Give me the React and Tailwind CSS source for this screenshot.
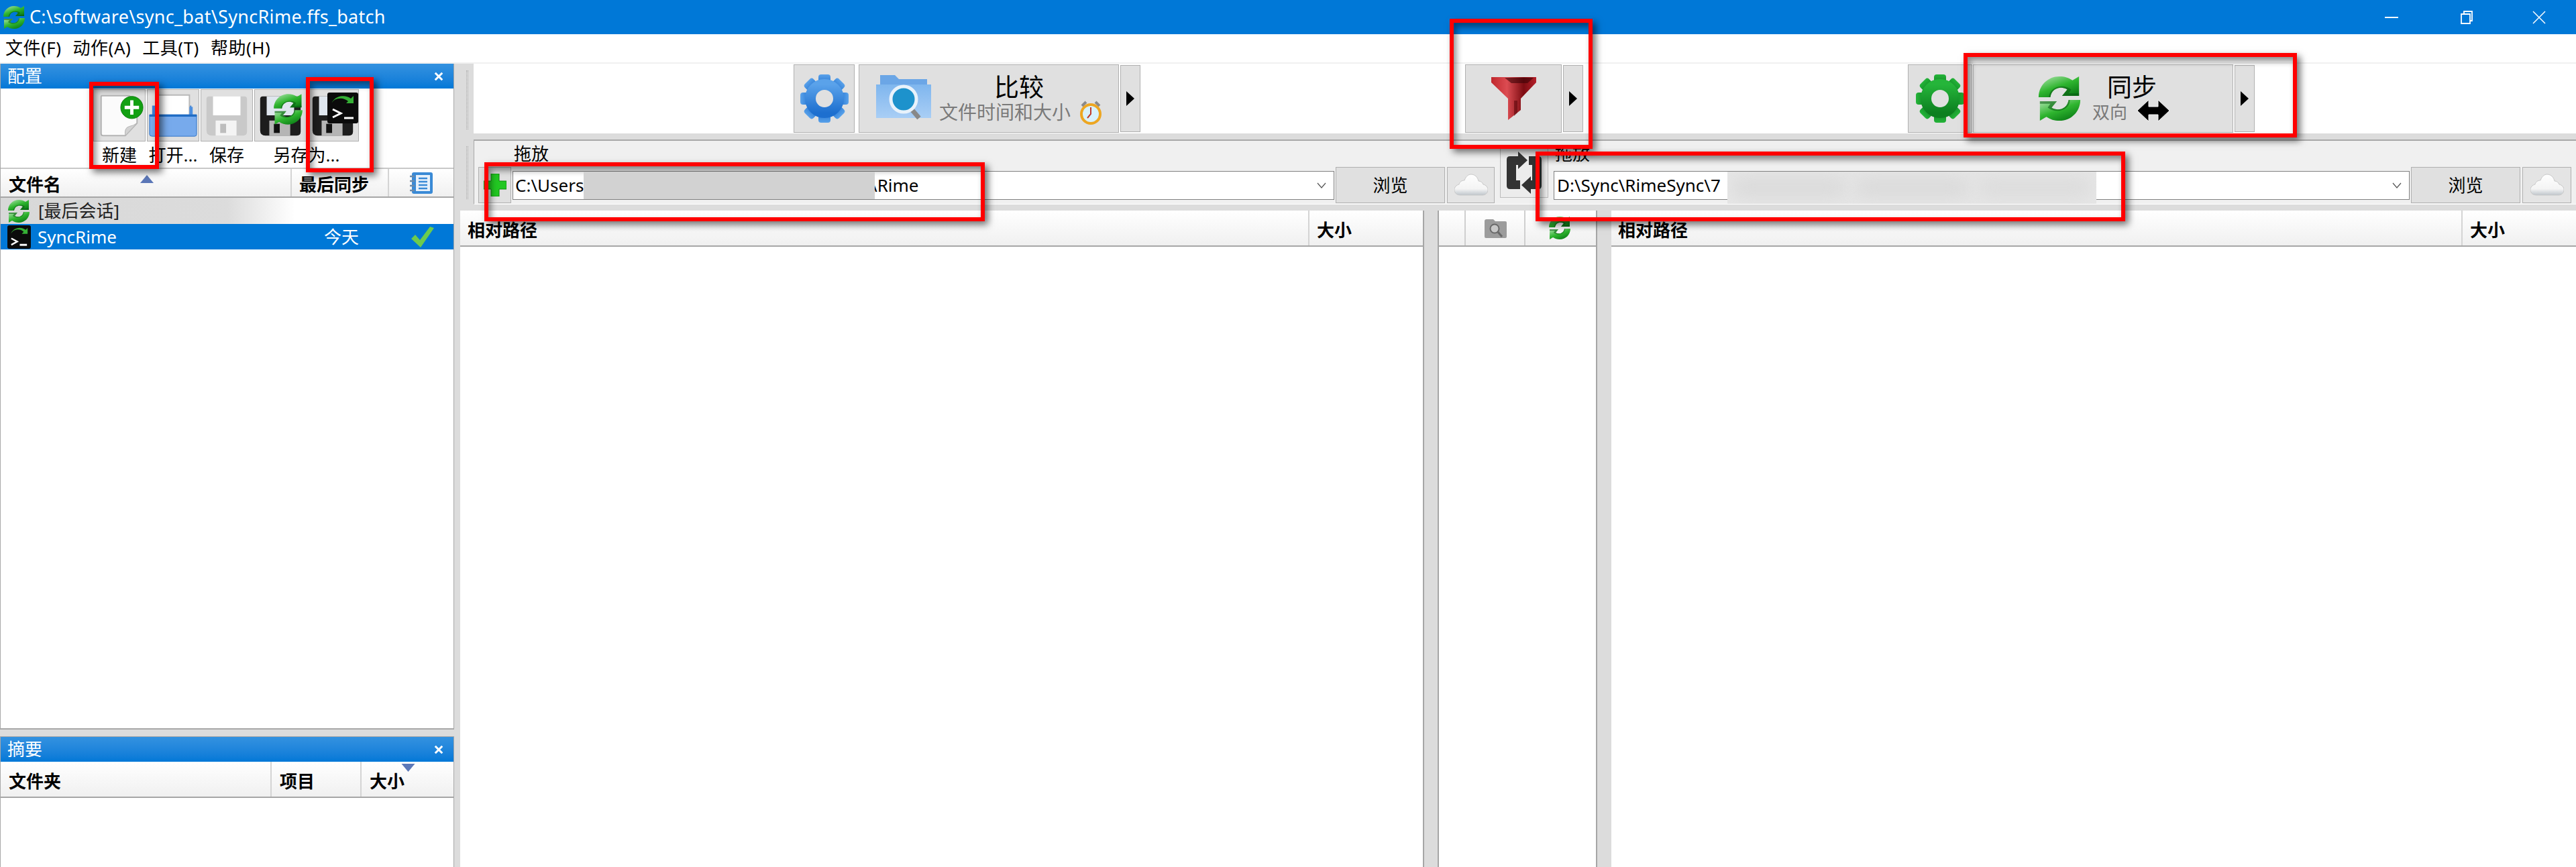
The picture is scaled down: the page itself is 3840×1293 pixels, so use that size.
import React from "react";

const font = "font-['Noto_Sans','Noto_Sans_CJK_SC',sans-serif]";

function SyncIcon({ className, id = "s" }) {
  return (
    <svg viewBox="0 0 34 36" className={className}>
      <defs>
        <linearGradient id={id} x1="0" y1="0" x2="0.7" y2="1">
          <stop offset="0" stopColor="#b4e6b4" />
          <stop offset="0.55" stopColor="#2fb52f" />
          <stop offset="1" stopColor="#0b7d16" />
        </linearGradient>
      </defs>
      <g fill={`url(#${id})`}>
        <path d="M1 17C1 8 8 1 17 1c4 0 7 1 10 3l5-3v15H19l4-5c-5-3-12-1-13 6z" />
        <path d="M33 19c0 9-7 16-16 16-4 0-7-1-10-3l-5 3V20h13l-4 5c5 3 12 1 13-6z" />
      </g>
      <path d="M10 17c1-7 8-9 13-6l-4 5h13v-2H24l2-3c-6-5-17-2-17 6z" fill="#0a5a12" opacity="0.55" />
      <path d="M24 19c-1 7-8 9-13 6l4-5H2v2h8l-2 3c6 5 17 2 17-6z" fill="#0a5a12" opacity="0.55" />
    </svg>
  );
}

function Gear({ className, color, dark, id }) {
  const teeth = [0, 45, 90, 135, 180, 225, 270, 315];
  return (
    <svg viewBox="0 0 74 74" className={className}>
      <defs>
        <linearGradient id={id} x1="0" y1="0" x2="0" y2="1">
          <stop offset="0" stopColor={color} />
          <stop offset="1" stopColor={dark} />
        </linearGradient>
      </defs>
      <g fill={`url(#${id})`}>
        {teeth.map((a) => (
          <rect key={a} x="28" y="1" width="18" height="16" rx="4" transform={`rotate(${a} 37 37)`} />
        ))}
      </g>
      <circle cx="37" cy="37" r="21" fill="none" stroke={`url(#${id})`} strokeWidth="16" />
      <circle cx="37" cy="37" r="8" fill="#e0e0e0" />
    </svg>
  );
}

function Floppy({ className, light }) {
  const body = light ? "#c9c9c9" : "#1d1d1d";
  const label = light ? "#ffffff" : "#dfe6ee";
  const shutter = light ? "#f4f4f4" : "#b5b5b5";
  const hole = light ? "#bdbdbd" : "#111";
  return (
    <svg viewBox="0 0 78 78" className={className}>
      <path d="M8 14q0-4 4-4h54q4 0 4 4v50q0 6-6 6H16q-8 0-8-8z" fill={body} />
      <rect x="18" y="10" width="42" height="29" fill={label} />
      <rect x="22" y="47" width="32" height="23" fill={shutter} />
      <rect x="29" y="52" width="9" height="14" fill={hole} />
    </svg>
  );
}

function ToolBtn({ children }) {
  return (
    <div className="relative w-[78px] h-[78px] shrink-0 bg-[#e0e0e0] border border-[#b0b0b0] flex items-center justify-center">
      {children}
    </div>
  );
}

function Arrow() {
  return (
    <div className="w-[30px] ml-[2px] my-px bg-[#e0e0e0] border border-[#b0b0b0] flex items-center justify-center">
      <svg viewBox="0 0 12 22" className="w-[12px] h-[22px]">
        <path d="M0 0l12 11L0 22z" fill="#000" />
      </svg>
    </div>
  );
}

function Grip({ className }) {
  return <div className={`w-[3px] border-x border-dotted border-[#a8a8a8] ${className}`} />;
}

function Funnel() {
  return (
    <svg viewBox="0 0 67 66" className="w-[67px] h-[66px]">
      <defs>
        <linearGradient id="fn" x1="0" y1="0" x2="1" y2="0">
          <stop offset="0" stopColor="#c0272d" />
          <stop offset="0.35" stopColor="#dc4c52" />
          <stop offset="0.72" stopColor="#7d0c12" />
          <stop offset="1" stopColor="#b5202a" />
        </linearGradient>
      </defs>
      <path d="M0 1h67v8L44 33v17L25 65V33L0 9z" fill="url(#fn)" />
      <path d="M20 2h43l-9 8H30z" fill="#3a0306" opacity="0.6" />
      <path d="M34 36h5v18l-5 5z" fill="#5c070c" opacity="0.6" />
    </svg>
  );
}

function Cloud() {
  return (
    <svg viewBox="0 0 50 34" className="w-[50px] h-[34px]">
      <defs>
        <linearGradient id="cl" x1="0" y1="0" x2="0" y2="1">
          <stop offset="0" stopColor="#ffffff" />
          <stop offset="0.7" stopColor="#f4f4f4" />
          <stop offset="1" stopColor="#bfc6cc" />
        </linearGradient>
      </defs>
      <path d="M9 32C2 32 0 27 0 24c0-4 3-7 7-8 1-4 4-6 8-6 2-6 6-9 10-9 6 0 10 5 11 10 3 0 6 2 7 5 4 1 7 4 7 8 0 5-4 8-8 8z" fill="url(#cl)" stroke="#c8c8c8" />
    </svg>
  );
}

function BrowseBtn() {
  return (
    <div className="w-[163px] h-[54px] bg-[#e0e0e0] border border-[#b0b0b0] flex items-center justify-center text-[26px] text-black">
      浏览
    </div>
  );
}

function CloudBtn({ className }) {
  return (
    <div className={`h-[54px] bg-[#e4e4e4] border border-[#b0b0b0] flex items-center justify-center ${className}`}>
      <Cloud />
    </div>
  );
}

function Chevron() {
  return (
    <svg viewBox="0 0 14 9" className="absolute right-[11px] top-[16px] w-[14px] h-[9px]">
      <path d="M1 1l6 7 6-7" fill="none" stroke="#555" strokeWidth="1.2" />
    </svg>
  );
}

function HeaderCell({ className, children }) {
  return (
    <div className={`h-full flex items-center pt-[6px] font-bold text-[26px] text-black border-r-2 border-[#d4d4d4] ${className}`}>
      {children}
    </div>
  );
}

const headerBar = "flex h-[54px] shrink-0 bg-gradient-to-b from-white to-[#f0f0f0] border-b-2 border-[#a6a6a6]";

function Caption({ title }) {
  return (
    <div className="h-[37px] shrink-0 flex items-center justify-between pl-[10px] pr-[14px] text-white text-[26px] bg-gradient-to-b from-[#3392e0] to-[#0078d7]">
      <span>{title}</span>
      <svg viewBox="0 0 16 16" className="w-[16px] h-[14px]">
        <path d="M2 2l12 12M14 2L2 14" stroke="#fff" strokeWidth="3.4" />
      </svg>
    </div>
  );
}

function RedBox({ className }) {
  return (
    <div className={`absolute border-[6px] border-[#ff0000] shadow-[5px_5px_10px_rgba(0,0,0,0.55),inset_4px_6px_10px_rgba(0,0,0,0.45)] ${className}`} />
  );
}

export default function App() {
  return (
    <div className={`relative w-[3840px] h-[1293px] overflow-hidden flex flex-col bg-[#dcdcdc] ${font}`}>
      {/* title bar */}
      <div className="h-[51px] shrink-0 bg-[#0078d7] flex items-center text-white">
        <SyncIcon id="t1" className="w-[34px] h-[36px] ml-[4px] mt-[1px]" />
        <span className="ml-[6px] text-[27px] tracking-[0.3px]">C:\software\sync_bat\SyncRime.ffs_batch</span>
        <div className="ml-auto flex items-center">
          <div className="w-[20px] h-[2px] bg-white mr-[93px]" />
          <svg viewBox="0 0 18 20" className="w-[18px] h-[20px] mr-[89px]">
            <path d="M5 4V1h12v14h-3M1 5h13v14H1z" fill="none" stroke="#fff" strokeWidth="1.8" />
          </svg>
          <svg viewBox="0 0 20 20" className="w-[20px] h-[20px] mr-[45px]">
            <path d="M1 1l18 18M19 1L1 19" stroke="#fff" strokeWidth="1.5" />
          </svg>
        </div>
      </div>

      {/* menu */}
      <div className="h-[44px] shrink-0 bg-white border-b-2 border-[#f0f0f0] flex items-center pl-[8px] gap-[17px] text-[26px] tracking-[0.5px] text-black pb-[2px]">
        <span>文件(F)</span>
        <span>动作(A)</span>
        <span>工具(T)</span>
        <span>帮助(H)</span>
      </div>

      <div className="flex-1 flex min-h-0">
        {/* left panes */}
        <div className="w-[677px] shrink-0 flex flex-col">
          <div className="h-[993px] shrink-0 flex flex-col bg-white border-x border-b-2 border-[#a8a8a8]">
            <Caption title="配置" />
            <div className="h-[120px] shrink-0 flex pl-[138px] gap-[2px] border-b-2 border-[#c8c8c8] text-[26px] text-black">
              <div className="flex flex-col items-center pt-px">
                <ToolBtn>
                  <svg viewBox="0 0 78 78" className="w-[78px] h-[78px]">
                    <path d="M12 9h42l12 12v30L48 70H14q-3 0-3-3V11q0-2 1-2z" fill="#fbfbfb" stroke="#b4b4b4" strokeWidth="2" />
                    <path d="M48 70q-2-12 6-14 6-1 12-5z" fill="#d2d2d2" stroke="#b4b4b4" />
                    <circle cx="58" cy="27" r="17" fill="#12a012" stroke="#0a7c0a" />
                    <path d="M58 16v22M47 27h22" stroke="#fff" strokeWidth="5" />
                  </svg>
                </ToolBtn>
                <span className="mt-[1px]">新建</span>
              </div>
              <div className="flex flex-col items-center pt-px">
                <ToolBtn>
                  <svg viewBox="0 0 78 78" className="w-[78px] h-[78px]">
                    <path d="M7 24h60v30H7z" fill="#3f83d8" />
                    <path d="M16 8h48v42H16z" fill="#fff" stroke="#b8b8b8" strokeWidth="2" />
                    <path d="M64 26h5v20h-5z" fill="#4b8fe0" />
                    <path d="M3 38h72v30q0 3-3 3H7q-4 0-4-3z" fill="#77aaec" stroke="#2f74c8" strokeWidth="1" />
                    <path d="M3 38h72v3H3z" fill="#1f6cc4" />
                  </svg>
                </ToolBtn>
                <span className="mt-[1px]">打开...</span>
              </div>
              <div className="flex flex-col items-center pt-px">
                <ToolBtn>
                  <Floppy light className="w-[78px] h-[78px]" />
                </ToolBtn>
                <span className="mt-[1px]">保存</span>
              </div>
              <div className="flex flex-col items-center pt-px">
                <div className="flex">
                  <ToolBtn>
                    <Floppy className="w-[78px] h-[78px]" />
                    <SyncIcon id="t2" className="absolute left-[26px] top-[5px] w-[47px] h-[48px]" />
                  </ToolBtn>
                  <ToolBtn>
                    <Floppy className="w-[78px] h-[78px]" />
                    <svg viewBox="0 0 46 46" className="absolute left-[30px] top-[4px] w-[46px] h-[46px]">
                      <rect width="46" height="46" rx="3" fill="#0b0b0b" />
                      <path d="M6 17c3-9 17-11 25-4l-3 3h11V5l-4 4C26 2 10 5 6 17z" fill="#35b035" />
                      <path d="M8 25l12 6-12 6" fill="none" stroke="#fff" strokeWidth="3" />
                      <path d="M25 38h14" stroke="#fff" strokeWidth="3" />
                    </svg>
                  </ToolBtn>
                </div>
                <span className="mt-[1px]">另存为...</span>
              </div>
            </div>
            <div className="relative flex h-[43px] shrink-0 bg-gradient-to-b from-white to-[#f0f0f0] border-b-2 border-[#a6a6a6]">
              <HeaderCell className="w-[434px] pl-[12px]">文件名</HeaderCell>
              <HeaderCell className="w-[145px] pl-[11px]">最后同步</HeaderCell>
              <div className="flex-1 flex items-center justify-center">
                <svg viewBox="0 0 35 34" className="w-[35px] h-[34px]">
                  <rect x="3" y="1" width="31" height="32" rx="3" fill="#3a8ad6" />
                  <rect x="9" y="5" width="21" height="24" fill="#e8f1fb" />
                  <path d="M13 10h13M13 15h13M13 20h13M13 25h13" stroke="#3a8ad6" strokeWidth="2.4" />
                  <path d="M0 7h7M0 14h7M0 21h7M0 28h7" stroke="#6d8aa8" strokeWidth="2.4" />
                </svg>
              </div>
              <svg viewBox="0 0 20 12" className="absolute left-[208px] top-[9px] w-[20px] h-[12px]">
                <path d="M10 0l10 12H0z" fill="#5c78b8" />
              </svg>
            </div>
            <div className="h-[39px] shrink-0 flex items-center pl-[10px] text-[26px] text-[#222] bg-gradient-to-r from-[#d8d8d8] via-[#dcdcdc] via-50% to-white to-[65%]">
              <SyncIcon id="t3" className="w-[34px] h-[36px]" />
              <span className="ml-[12px]">[最后会话]</span>
            </div>
            <div className="h-[38px] shrink-0 flex items-center pl-[10px] text-[26px] text-white bg-[#0078d7]">
              <svg viewBox="0 0 36 36" className="w-[35px] h-[35px]">
                <rect width="36" height="36" rx="3" fill="#0b0b0b" />
                <path d="M5 14c3-8 14-10 20-4l-3 3h9V4l-3 3C20 1 8 4 5 14z" fill="#35b035" />
                <path d="M6 20l9 5-9 5" fill="none" stroke="#fff" strokeWidth="2.5" />
                <path d="M19 30h11" stroke="#fff" strokeWidth="3" />
              </svg>
              <span className="ml-[10px] w-[427px]">SyncRime</span>
              <span className="w-[130px]">今天</span>
              <svg viewBox="0 0 34 34" className="w-[34px] h-[34px]">
                <path d="M0 20l6-6 7 8L28 2l6 2-20 29z" fill="#6ccb4e" />
              </svg>
            </div>
          </div>
          <div className="h-[10px] shrink-0" />
          <div className="flex-1 flex flex-col bg-white border-x border-t border-[#a8a8a8]">
            <Caption title="摘要" />
            <div className={`relative ${headerBar}`}>
              <HeaderCell className="w-[404px] pl-[12px]">文件夹</HeaderCell>
              <HeaderCell className="w-[134px] pl-[12px]">项目</HeaderCell>
              <div className="flex-1 h-full flex items-center pt-[6px] pl-[12px] font-bold text-[26px] text-black">大小</div>
              <svg viewBox="0 0 20 12" className="absolute left-[597px] top-[3px] w-[21px] h-[12px]">
                <path d="M0 0h20L10 12z" fill="#5c78b8" />
              </svg>
            </div>
          </div>
        </div>

        <div className="w-[9px] shrink-0" />

        {/* main area */}
        <div className="flex-1 min-w-0 flex flex-col">
          <div className="flex h-[104px] shrink-0">
            <div className="w-[20px] shrink-0 flex justify-center pt-[10px] pb-[6px]">
              <Grip className="h-full" />
            </div>
            <div className="flex-1 bg-white flex py-px pl-[477px]">
              <div className="w-[91px] bg-[#e0e0e0] border border-[#b0b0b0] flex items-center justify-center">
                <Gear id="g1" color="#5aa2ea" dark="#1d6fcf" className="w-[74px] h-[74px]" />
              </div>
              <div className="w-[388px] ml-[6px] bg-[#e0e0e0] border border-[#b0b0b0] relative flex">
                <svg viewBox="0 0 82 68" className="absolute left-[25px] top-[15px] w-[82px] h-[68px]">
                  <defs>
                    <linearGradient id="fd" x1="0" y1="0" x2="0" y2="1">
                      <stop offset="0" stopColor="#7fb6ee" />
                      <stop offset="1" stopColor="#a9cef5" />
                    </linearGradient>
                  </defs>
                  <path d="M6 0h22l6 6h42v14H6z" fill="#6ba6e6" />
                  <path d="M0 14h82v50H0z" fill="url(#fd)" />
                  <path d="M52 50l12 14" stroke="#888" strokeWidth="7" />
                  <circle cx="41" cy="36" r="19" fill="#1d92cc" stroke="#e8f2fb" strokeWidth="5" />
                </svg>
                <span className="absolute left-[201px] top-[8px] text-[37px] leading-[50px] text-black">比较</span>
                <span className="absolute left-[119px] top-[53px] text-[28px] leading-[34px] text-[#7a7a7a] whitespace-nowrap">文件时间和大小</span>
                <svg viewBox="0 0 34 36" className="absolute left-[328px] top-[53px] w-[34px] h-[36px]">
                  <path d="M4 8l6-6M30 8l-6-6" stroke="#8a8a8a" strokeWidth="4" />
                  <circle cx="17" cy="20" r="14" fill="#d8f1fb" stroke="#eda622" strokeWidth="4" />
                  <path d="M17 10v10l-5 6" fill="none" stroke="#c0392b" strokeWidth="2" />
                </svg>
              </div>
              <Arrow />
              <div className="w-[144px] ml-[484px] bg-[#e0e0e0] border border-[#b0b0b0] flex items-center justify-center">
                <Funnel />
              </div>
              <Arrow />
              <div className="w-[96px] ml-[484px] bg-[#e0e0e0] border border-[#b0b0b0] flex items-center justify-center">
                <Gear id="g2" color="#25b53a" dark="#0c7f1f" className="w-[74px] h-[74px]" />
              </div>
              <div className="w-[388px] ml-px bg-[#e0e0e0] border border-[#b0b0b0] relative">
                <SyncIcon id="t4" className="absolute left-[94px] top-[15px] w-[68px] h-[70px]" />
                <span className="absolute left-[199px] top-[8px] text-[37px] leading-[50px] text-black">同步</span>
                <span className="absolute left-[177px] top-[53px] text-[26px] leading-[34px] text-[#7a7a7a]">双向</span>
                <svg viewBox="0 0 48 32" className="absolute left-[244px] top-[52px] w-[48px] h-[32px]">
                  <path d="M0 16L17 0v10h14V0l17 16-17 16V22H17v10z" fill="#000" stroke="#f4f4f4" />
                </svg>
              </div>
              <Arrow />
            </div>
          </div>

          {/* folder bar */}
          <div className="flex mt-[9px] h-[97px] shrink-0">
            <div className="w-[20px] shrink-0 flex justify-center pt-[10px] pb-[8px]">
              <Grip className="h-full" />
            </div>
            <div className="flex-1 bg-[#f0f0f0] border-t-2 border-l border-b border-t-[#a8a8a8] border-l-[#a8a8a8] border-b-white flex pl-[6px] text-[26px] text-black">
              <div className="w-[1515px] flex flex-col">
                <div className="h-[39px] pl-[53px] flex items-center">拖放</div>
                <div className="flex items-center h-[54px]">
                  <div className="w-[49px] h-[54px] bg-[#e0e0e0] border border-[#b0b0b0] flex items-center justify-center">
                    <svg viewBox="0 0 34 34" className="w-[34px] h-[34px]">
                      <path d="M11 0h12v11h11v12H23v11H11V23H0V11h11z" fill="#22c722" stroke="#0d8a0d" />
                    </svg>
                  </div>
                  <div className="relative w-[1225px] h-[43px] ml-[2px] bg-white border border-[#808080] flex items-center pl-[3px]">
                    <span className="w-[102px] overflow-hidden whitespace-nowrap">C:\Users</span>
                    <div className="relative z-10 w-[434px] h-full bg-[#d2d2d2]" />
                    <span className="-ml-[6px]">\Rime</span>
                    <Chevron />
                  </div>
                  <div className="ml-[2px]"><BrowseBtn /></div>
                  <CloudBtn className="w-[71px] ml-[3px]" />
                </div>
              </div>
              <div className="w-[72px] h-[75px] ml-[8px] mt-[10px] bg-[#ececec] border border-[#bcbcbc] flex items-center justify-center">
                <svg viewBox="0 0 52 63" className="w-[52px] h-[63px]">
                  <path d="M0 12q0-5 5-5H17V0L31 13 17 26V20H14V43H20V56H5q-5 0-5-5z" fill="#333" />
                  <path d="M33 7H47q5 0 5 5V51q0 5-5 5H36V63L22 50 36 37V43H38V20H33z" fill="#333" />
                </svg>
              </div>
              <div className="w-[1517px] ml-[8px] flex flex-col">
                <div className="h-[39px] pl-[2px] flex items-center">拖放</div>
                <div className="flex items-center h-[54px]">
                  <div className="relative w-[1277px] h-[43px] bg-white border border-[#808080] flex items-start pl-[4px]">
                    <span className="w-[254px] h-full flex items-center whitespace-nowrap overflow-hidden">D:\Sync\RimeSync\7</span>
                    <div className="relative z-10 w-[550px] h-[48px] bg-[#e6e6e6] overflow-hidden flex items-center justify-around">
                      <div className="w-[170px] h-[30px] rounded-full bg-[#dadada] blur-md" />
                      <div className="w-[170px] h-[30px] rounded-full bg-[#dadada] blur-md" />
                      <div className="w-[170px] h-[30px] rounded-full bg-[#dcdcdc] blur-md" />
                    </div>
                    <Chevron />
                  </div>
                  <div className="ml-[2px]"><BrowseBtn /></div>
                  <CloudBtn className="w-[73px] ml-[3px]" />
                </div>
              </div>
            </div>
          </div>

          {/* file grids */}
          <div className="flex-1 mt-[9px] flex min-h-0">
            <div className="w-[1437px] bg-white border-r-2 border-[#a6a6a6] flex flex-col">
              <div className={headerBar}>
                <HeaderCell className="w-[1266px] pl-[11px]">相对路径</HeaderCell>
                <div className="flex-1 h-full flex items-center pt-[6px] pl-[11px] font-bold text-[26px]">大小</div>
              </div>
            </div>
            <div className="w-[238px] ml-[20px] bg-white border-x-2 border-[#a6a6a6] flex flex-col">
              <div className={headerBar}>
                <div className="w-[40px] border-r-2 border-[#cfcfcf]" />
                <div className="w-[89px] border-r-2 border-[#cfcfcf] flex items-center justify-center">
                  <svg viewBox="0 0 36 32" className="w-[36px] h-[32px]">
                    <path d="M2 6q0-3 3-3h10l3 3h15q2 0 2 2v21q0 2-2 2H4q-2 0-2-2z" fill="#9c9c9c" />
                    <circle cx="17" cy="17" r="6.5" fill="#c8c8c8" stroke="#6a6a6a" strokeWidth="2" />
                    <path d="M22 22l6 7" stroke="#6a6a6a" strokeWidth="3" />
                  </svg>
                </div>
                <div className="flex-1 flex items-center justify-start pl-[34px]">
                  <SyncIcon id="t5" className="w-[34px] h-[36px]" />
                </div>
              </div>
            </div>
            <div className="flex-1 ml-[21px] bg-white flex flex-col">
              <div className={headerBar}>
                <HeaderCell className="w-[1269px] pl-[10px]">相对路径</HeaderCell>
                <div className="flex-1 h-full flex items-center pt-[6px] pl-[11px] font-bold text-[26px]">大小</div>
              </div>
            </div>
          </div>
        </div>
      </div>

      {/* red annotation frames drawn over the screenshot */}
      <RedBox className="left-[133px] top-[122px] w-[104px] h-[130px]" />
      <RedBox className="left-[456px] top-[115px] w-[101px] h-[142px]" />
      <RedBox className="left-[722px] top-[242px] w-[746px] h-[88px]" />
      <RedBox className="left-[2161px] top-[28px] w-[213px] h-[194px]" />
      <RedBox className="left-[2289px] top-[226px] w-[879px] h-[104px]" />
      <RedBox className="left-[2927px] top-[79px] w-[497px] h-[126px]" />
    </div>
  );
}
